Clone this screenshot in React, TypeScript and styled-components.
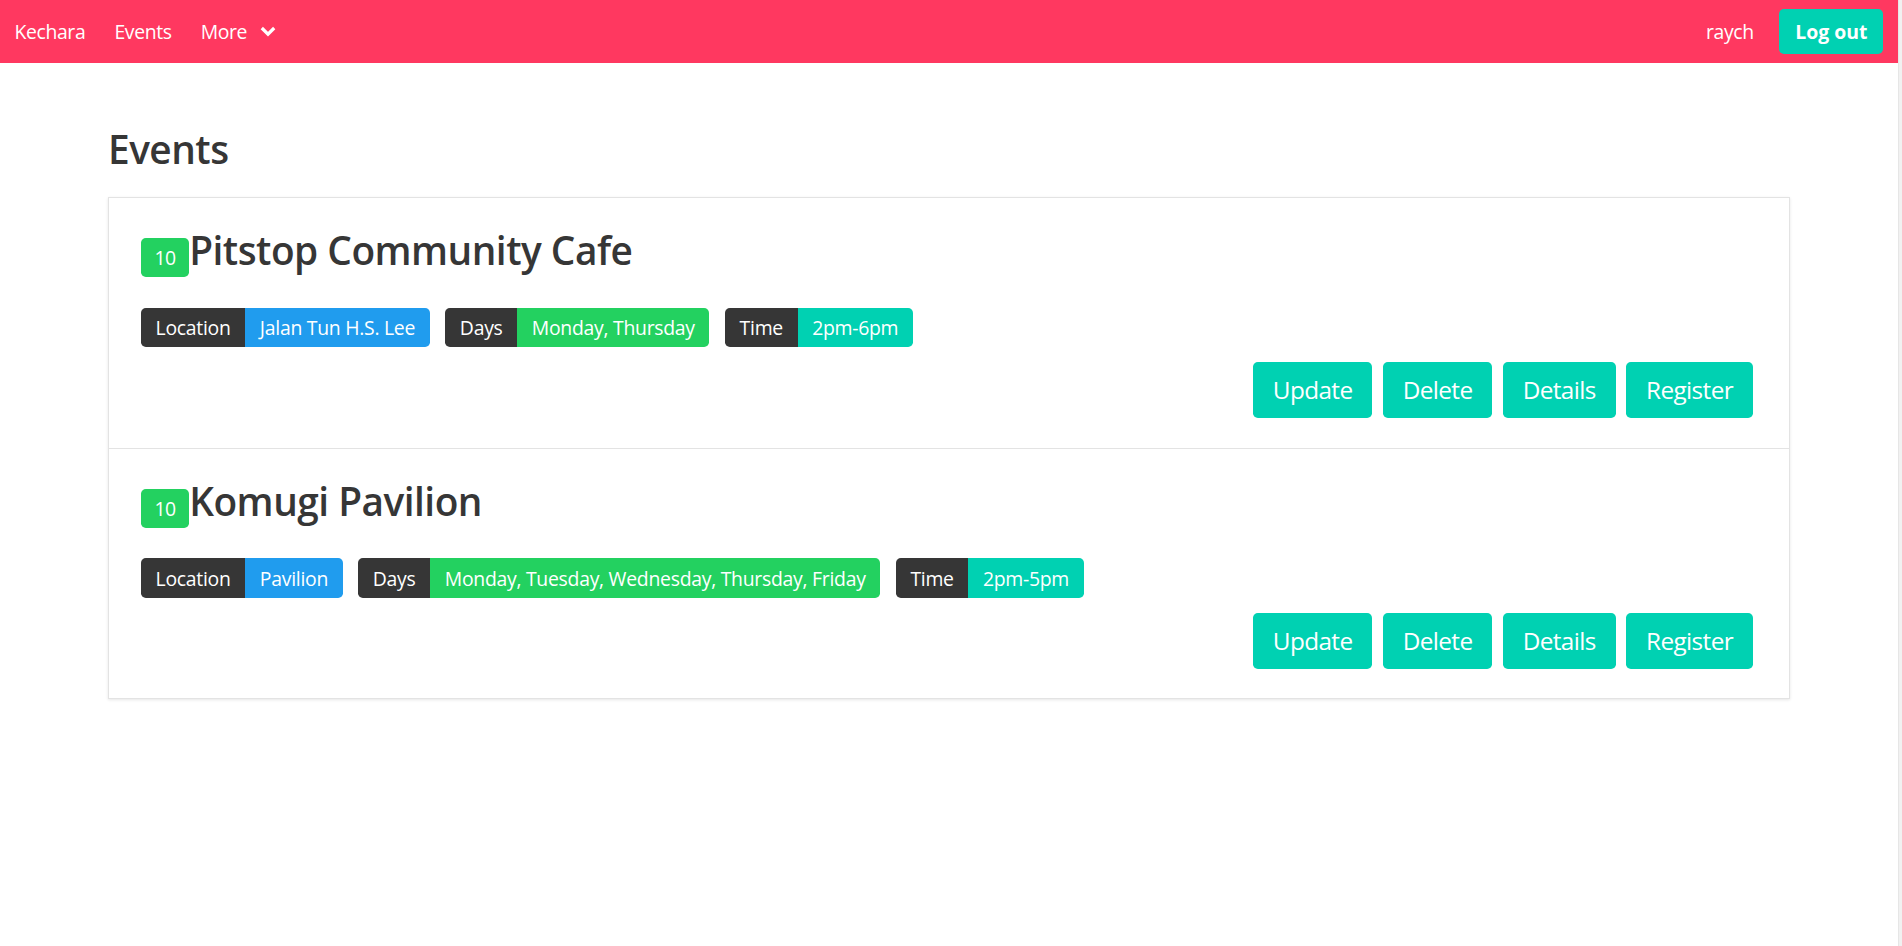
import { FC } from "react";
import styled, { createGlobalStyle } from "styled-components";

type EventData = {
   id: number
   count: number
   name: string
   location: string
   days: string
   time: string
}

const events: EventData[] = [
   { id: 1, count: 10, name: "Pitstop Community Cafe", location: "Jalan Tun H.S. Lee", days: "Monday, Thursday", time: "2pm-6pm" },
   { id: 2, count: 10, name: "Komugi Pavilion", location: "Pavilion", days: "Monday, Tuesday, Wednesday, Thursday, Friday", time: "2pm-5pm" },
]

const GlobalStyle = createGlobalStyle`
   html, body {
      margin: 0;
      padding: 0;
      background: #fff;
   }
   body {
      font-family: "Open Sans", "Noto Sans", sans-serif;
      color: #4a4a4a;
   }
   *, *::before, *::after {
      box-sizing: border-box;
   }
`

const Shell = styled.div`
   display: flex;
   min-height: 100vh;
`
const Page = styled.div`
   flex: 1;
   min-width: 0;
`
const ScrollTrack = styled.div`
   width: 4px;
   background: #f1f1f1;
   border-left: 1px solid #e6e6e6;
`

const Navbar = styled.nav`
   display: flex;
   justify-content: space-between;
   height: 63px;
   background: #ff3860;
`
const NavGroup = styled.div`
   display: flex;
   align-items: stretch;
`
const NavItem = styled.a`
   display: flex;
   align-items: center;
   gap: 13px;
   padding: 0 14.6px;
   color: #fff;
   font-size: 19.4px;
   line-height: 1.5;
   letter-spacing: -0.02em;
   text-decoration: none;
   cursor: pointer;
`
const ButtonItem = styled(NavItem)`
   padding: 0 14.6px 0 11px;
`
const LogoutButton = styled.button`
   height: 44.7px;
   padding: 0 16px;
   border: none;
   border-radius: 5px;
   background: #00d1b2;
   color: #fff;
   font: 700 19.4px/1.5 "Open Sans", sans-serif;
   cursor: pointer;
`

const Main = styled.main`
   padding: 64.5px 108px 60px;
`
const PageTitle = styled.h1`
   margin: 0 0 25.6px;
   font-size: 38.8px;
   font-weight: 600;
   line-height: 1.125;
   letter-spacing: -0.013em;
   color: #363636;
`
const Box = styled.div`
   background: #fff;
   border: 1px solid #e3e3e3;
   box-shadow: 0 1px 3px rgba(10, 10, 10, 0.1);
`
const EventItem = styled.article`
   padding: 31.5px 36px 29.6px 32px;
   & + & {
      border-top: 1px solid #e3e3e3;
   }
`
const TitleRow = styled.div`
   display: flex;
   align-items: baseline;
`
const CountTag = styled.span`
   display: inline-flex;
   align-items: center;
   height: 39.3px;
   padding: 0 13.4px;
   border-radius: 4.85px;
   background: #23d160;
   color: #fff;
   font-size: 19.4px;
   line-height: 1.5;
   letter-spacing: -0.02em;
`
const EventName = styled.h2`
   margin: 0;
   font-size: 38.8px;
   font-weight: 600;
   line-height: 1.125;
   letter-spacing: -0.013em;
   color: #363636;
`
const TagsRow = styled.div`
   display: flex;
   flex-wrap: wrap;
   gap: 15.6px;
   margin-top: 30.2px;
`
const TagPair = styled.div`
   display: flex;
   border-radius: 4.85px;
   overflow: hidden;
`
const Tag = styled.span<{ $color: string }>`
   display: inline-flex;
   align-items: center;
   height: 39.3px;
   padding: 0 14.6px;
   background: ${({ $color }) => $color};
   color: #fff;
   font-size: 19.4px;
   line-height: 1.5;
   letter-spacing: -0.014em;
   white-space: nowrap;
`
const Actions = styled.div`
   display: flex;
   justify-content: flex-end;
   gap: 10.3px;
   margin-top: 15.4px;
`
const ActionButton = styled.button`
   height: 55.7px;
   padding: 0 20px;
   border: none;
   border-radius: 4.85px;
   background: #00d1b2;
   color: #fff;
   font: 400 24.3px/1.5 "Open Sans", sans-serif;
   letter-spacing: -0.025em;
   cursor: pointer;
`

const Chevron: FC = () => (
   <svg width="16" height="11" viewBox="0 0 16 11" fill="none">
      <polyline points="1.8,2 8,8.2 14.2,2" stroke="#fff" strokeWidth="3.2" strokeLinejoin="miter" />
   </svg>
)

const LabeledTag: FC<{ label: string, value: string, color: string }> = ({ label, value, color }) => (
   <TagPair>
      <Tag $color="#363636">{label}</Tag>
      <Tag $color={color}>{value}</Tag>
   </TagPair>
)

const EventRow: FC<{ event: EventData }> = ({ event }) => (
   <EventItem>
      <TitleRow>
         <CountTag>{event.count}</CountTag>
         <EventName>{event.name}</EventName>
      </TitleRow>
      <TagsRow>
         <LabeledTag label="Location" value={event.location} color="#209cee" />
         <LabeledTag label="Days" value={event.days} color="#23d160" />
         <LabeledTag label="Time" value={event.time} color="#00d1b2" />
      </TagsRow>
      <Actions>
         <ActionButton>Update</ActionButton>
         <ActionButton>Delete</ActionButton>
         <ActionButton>Details</ActionButton>
         <ActionButton>Register</ActionButton>
      </Actions>
   </EventItem>
)

export default function App() {
   return (
      <Shell>
         <GlobalStyle />
         <Page>
            <Navbar>
               <NavGroup>
                  <NavItem>Kechara</NavItem>
                  <NavItem>Events</NavItem>
                  <NavItem>More<Chevron /></NavItem>
               </NavGroup>
               <NavGroup>
                  <NavItem>raych</NavItem>
                  <ButtonItem><LogoutButton>Log out</LogoutButton></ButtonItem>
               </NavGroup>
            </Navbar>
            <Main>
               <PageTitle>Events</PageTitle>
               <Box>
                  {events.map(ev => <EventRow key={ev.id} event={ev} />)}
               </Box>
            </Main>
         </Page>
         <ScrollTrack />
      </Shell>
   )
}
